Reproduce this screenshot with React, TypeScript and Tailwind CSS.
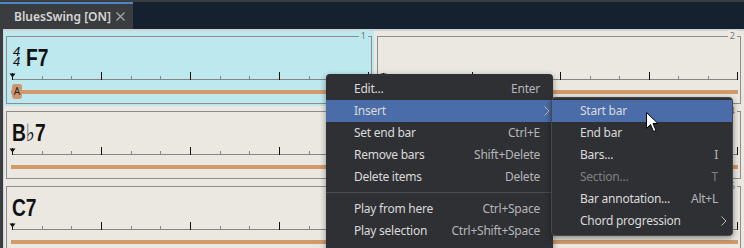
const ui = "font-['Noto_Sans','Open_Sans',sans-serif]";
const chordFont = "font-['Liberation_Sans','DejaVu_Sans',sans-serif]";

type Bar = { num: number; chord?: string; ts?: boolean; sel?: boolean; badge?: boolean };

const rows: Bar[][] = [
  [{ num: 1, chord: "F7", ts: true, sel: true, badge: true }, { num: 2 }],
  [{ num: 3, chord: "B♭7" }, { num: 4 }],
  [{ num: 5, chord: "C7" }, { num: 6 }],
];

function Timeline({ span }: { span: number }) {
  const step = span / 12;
  const ticks = Array.from({ length: 12 }, (_, i) => i + 1);
  return (
    <svg width={span + 6} height={9} className="block ml-[2px]">
      <line x1={3} y1={8.5} x2={span + 3} y2={8.5} stroke="#858585" strokeWidth={1} />
      {ticks.map((i) => {
        const x = Math.round(3 + i * step) + 0.5;
        const major = i % 3 === 0;
        return (
          <line
            key={i}
            x1={x}
            y1={major ? 1 : 5}
            x2={x}
            y2={9}
            stroke={major ? "#111" : "#858585"}
            strokeWidth={1}
          />
        );
      })}
      <path d="M0.5 2.5 L6.5 2.5 L3.5 6.5 Z" fill="#111" />
      <line x1={3.5} y1={2} x2={3.5} y2={9} stroke="#111" strokeWidth={1} />
    </svg>
  );
}

function BarCell({ bar, col }: { bar: Bar; col: number }) {
  const width = col === 0 ? 366 : 364;
  const bg = bar.sel ? "bg-[#bde9ee]" : "bg-[#ebe8e1]";
  return (
    <div className={`${bg} pt-[5px] ${col === 0 ? "px-[2px]" : "px-[3px]"} pb-[2px]`}>
      <div className="relative h-[68px] border border-[#8d8d8d]" style={{ width }}>
        <span
          className={`absolute top-[-7px] right-[3px] px-[2px] text-[9px] leading-[12px] text-[#777] ${ui} ${bg}`}
        >
          {bar.num}
        </span>
        <div className="h-[34px] pt-[9px] pl-[5px] flex items-start">
          {bar.ts && (
            <div className="flex flex-col items-center ml-[1px] mr-[6px] mt-[1px] text-[13px] leading-[10px] italic text-[#111] font-['Liberation_Sans',sans-serif]">
              <span>4</span>
              <span>4</span>
            </div>
          )}
          {bar.chord && (
            <span
              className={`inline-block origin-left scale-x-[0.8] text-[24px] leading-[24px] font-bold text-[#111] ${chordFont}`}
            >
              {bar.chord}
            </span>
          )}
        </div>
        <Timeline span={width - 10} />
        <div className="relative mt-[4px] h-[16px] ml-[4px] mr-[2px] flex items-center">
          <div className="h-[4px] w-full bg-[#d09a6b]" />
          {bar.badge && (
            <div
              className={`absolute left-[1px] top-0 w-[10px] h-[15px] rounded-[3px] bg-[#cd966c] flex items-center justify-center text-[10px] text-[#2a2420] ${ui}`}
            >
              A
            </div>
          )}
        </div>
      </div>
    </div>
  );
}

function Chevron() {
  return (
    <svg width={6} height={10} className="block">
      <polyline points="0.5,0.5 5,5 0.5,9.5" fill="none" stroke="#b8b8b8" strokeWidth={1} />
    </svg>
  );
}

type Item = { label: string; key?: string; sub?: boolean; hi?: boolean; off?: boolean };

function MenuRow({ item, pr }: { item: Item; pr: string }) {
  return (
    <div
      className={`h-[22px] flex items-center pl-[28px] ${pr} ${item.hi ? "bg-[#4a6da9]" : ""}`}
    >
      <span className={`flex-1 ${item.off ? "text-[#808080]" : "text-[#dadada]"}`}>{item.label}</span>
      {item.key && (
        <span className={item.off ? "text-[#808080]" : "text-[#b4b6b9]"}>{item.key}</span>
      )}
      {item.sub && <Chevron />}
    </div>
  );
}

const mainItems: Item[] = [
  { label: "Edit...", key: "Enter" },
  { label: "Insert", sub: true, hi: true },
  { label: "Set end bar", key: "Ctrl+E" },
  { label: "Remove bars", key: "Shift+Delete" },
  { label: "Delete items", key: "Delete" },
];
const playItems: Item[] = [
  { label: "Play from here", key: "Ctrl+Space" },
  { label: "Play selection", key: "Ctrl+Shift+Space" },
];
const subItems: Item[] = [
  { label: "Start bar", hi: true },
  { label: "End bar" },
  { label: "Bars...", key: "I" },
  { label: "Section...", key: "T", off: true },
  { label: "Bar annotation...", key: "Alt+L" },
  { label: "Chord progression", sub: true },
];

export default function App() {
  return (
    <div className={`relative w-[744px] h-[248px] overflow-hidden bg-[#3b3e41] ${ui}`}>
      <div className="h-[2px] bg-[#3b3e41]" />
      <div className="flex h-[27px] bg-[#15212f]">
        <div className="w-[133px] border-t-2 border-[#4b87c9] bg-[#3a3d40] flex items-center pl-[14px] pr-[8px]">
          <span className="shrink-0 text-[12px] font-semibold text-[#d6d6d6]">BluesSwing [ON]</span>
          <svg width={9} height={9} className="block ml-auto">
            <path d="M0.5 0.5 L8.5 8.5 M8.5 0.5 L0.5 8.5" stroke="#a8a8a8" strokeWidth={1.2} />
          </svg>
        </div>
      </div>
      <div className="pl-[3px]">
        <div className="h-[219px] border-t-2 border-l border-[#cdd3d6] bg-[#ebe8e1] grid grid-cols-2 content-start">
          {rows.map((r, ri) =>
            r.map((bar, ci) => <BarCell key={`${ri}-${ci}`} bar={bar} col={ci} />)
          )}
        </div>
      </div>

      <div className="absolute left-[326px] top-[74px] w-[227px] h-[190px] pt-[4px] rounded-[4px] bg-[#2f3033] shadow-[0_2px_6px_rgba(0,0,0,0.4)] text-[12px] tracking-[-0.25px]">
        {mainItems.map((it) => (
          <MenuRow key={it.label} item={it} pr={it.sub ? "pr-[3px]" : "pr-[13px]"} />
        ))}
        <div className="h-px bg-[#4c4d50] mt-[4px] mb-[5px]" />
        {playItems.map((it) => (
          <MenuRow key={it.label} item={it} pr="pr-[13px]" />
        ))}
      </div>

      <div className="absolute left-[551px] top-[97px] w-[182px] pt-[2px] pb-[3px] rounded-[4px] border border-[#47484b] bg-[#2f3033] shadow-[0_2px_6px_rgba(0,0,0,0.45)] text-[12px] tracking-[-0.25px]">
        {subItems.map((it) => (
          <MenuRow key={it.label} item={it} pr={it.sub ? "pr-[5px]" : "pr-[14px]"} />
        ))}
      </div>

      <svg width={13} height={21} className="absolute left-[646px] top-[112px]">
        <path
          d="M0.5 0.5 L0.5 16.5 L4.5 12.5 L7.5 19.5 L10 18.5 L7 11.5 L12 11.5 Z"
          fill="#fff"
          stroke="#000"
          strokeWidth={1}
          strokeLinejoin="miter"
        />
      </svg>
    </div>
  );
}
